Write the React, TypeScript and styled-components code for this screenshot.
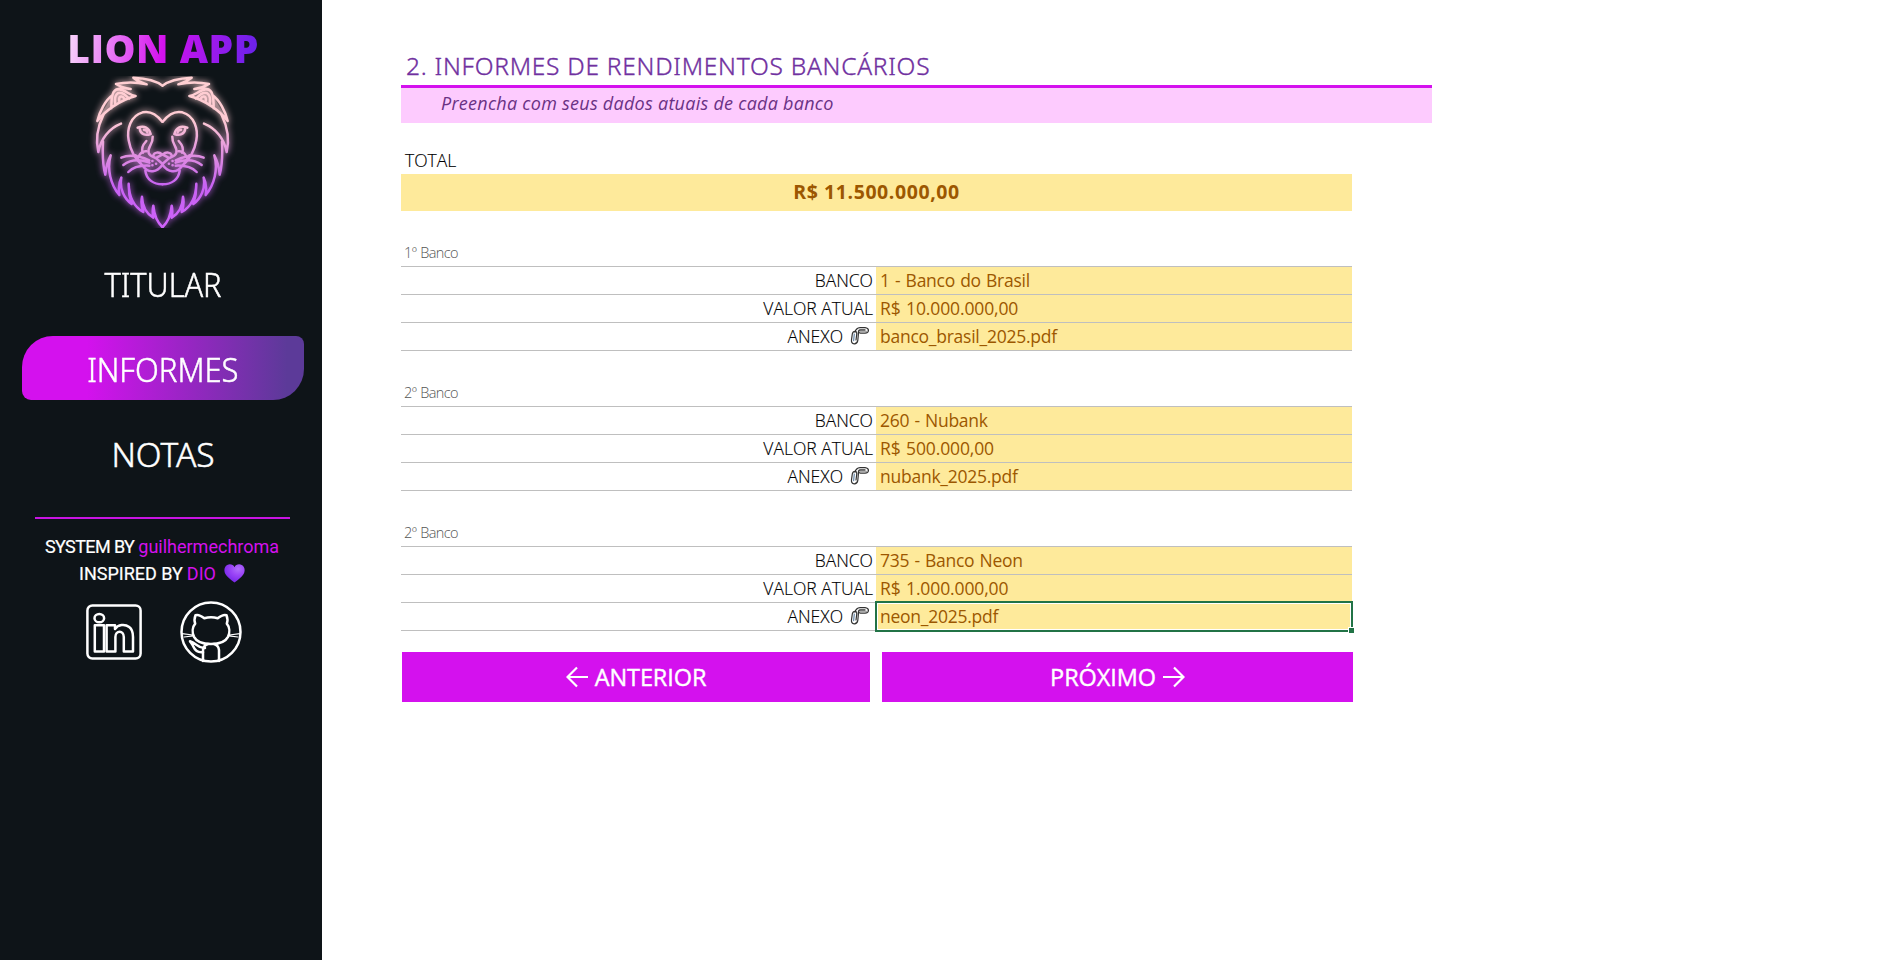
import React from "react";
import styled, { createGlobalStyle } from "styled-components";

const GlobalStyle = createGlobalStyle`
  *, *::before, *::after { box-sizing: border-box; }
  body {
    margin: 0;
    background: #fff;
    color: #000;
    font-family: "Open Sans", "Noto Sans", sans-serif;
  }
`;

const Page = styled.div`
  display: flex;
  height: 960px;
  overflow: hidden;
`;

/* ---------- sidebar ---------- */

const Sidebar = styled.aside`
  display: flex;
  flex-direction: column;
  align-items: center;
  flex: 0 0 322px;
  padding-top: 21px;
  padding-left: 4px;
  background: #0e1418;
  color: #fff;
`;

const Brand = styled.h1`
  margin: 0;
  height: 55px;
  line-height: 54px;
  font-size: 39px;
  font-weight: 900;
  letter-spacing: 0.5px;
  white-space: nowrap;
  background: linear-gradient(98deg, #f9dcfb 0%, #d411ee 50%, #6a22ea 97%);
  -webkit-background-clip: text;
  background-clip: text;
  color: transparent;
`;

const LionLogo = styled.svg`
  display: block;
  width: 165px;
  height: 152px;
  margin-right: 2px;
`;

const Nav = styled.nav`
  display: flex;
  flex-direction: column;
  align-items: center;
  gap: 21px;
  margin-top: 23px;
`;

const NavItem = styled.a<{ $active?: boolean }>`
  display: flex;
  align-items: center;
  justify-content: center;
  width: 282px;
  height: 64px;
  padding-top: 1px;
  border-radius: 31px 8px 31px 9px;
  background: ${(p) =>
    p.$active
      ? "linear-gradient(90deg, #d411ee 0%, #d411ee 23%, #5c3a99 94%)"
      : "transparent"};
  color: #fff;
`;

const NavLabel = styled.span<{ $condense: number }>`
  font-family: "Noto Sans", sans-serif;
  font-size: 33.5px;
  font-weight: 350;
  -webkit-text-stroke: 0.5px #fff;
  transform: scaleX(${(p) => p.$condense});
`;

const Divider = styled.hr`
  width: 255px;
  height: 2px;
  margin: 32px 2px 14px 0;
  border: 0;
  background: #c814e2;
`;

const CreditLine = styled.p`
  display: flex;
  align-items: center;
  height: 27px;
  margin: 0 2px 0 0;
  font-family: Roboto, sans-serif;
  font-size: 18px;
  white-space: nowrap;
`;

const CreditLabel = styled.span<{ $tracking: string }>`
  margin-right: 4px;
  font-weight: 450;
  letter-spacing: ${(p) => p.$tracking};
  -webkit-text-stroke: 0.2px #fff;
`;

const CreditName = styled.span`
  color: #d411ee;
`;

const HeartIcon = styled.svg`
  width: 21px;
  height: 19px;
  margin-left: 8px;
`;

const Socials = styled.div`
  display: flex;
  align-items: center;
  gap: 38px;
  margin: 14px 0 0 2px;
`;

const SocialIcon = styled.svg<{ $size: number }>`
  display: block;
  width: ${(p) => p.$size}px;
  height: ${(p) => p.$size}px;
  fill: none;
  stroke: #fff;
  stroke-width: 2.5;
  stroke-linejoin: round;
  stroke-linecap: round;
`;

/* ---------- content ---------- */

const Content = styled.main`
  display: flex;
  flex-direction: column;
  flex: 1;
  padding: 46px 0 0 79px;
`;

const TitleBlock = styled.header`
  width: 1031px;
`;

const Title = styled.h2`
  height: 42px;
  margin: 0;
  padding-left: 5px;
  border-bottom: 3px solid #d411ee;
  line-height: 39px;
  font-family: "Noto Sans", sans-serif;
  font-size: 24.5px;
  font-weight: 330;
  letter-spacing: 0.74px;
  -webkit-text-stroke: 0.35px #7030a0;
  color: #7030a0;
`;

const Subtitle = styled.p`
  height: 35px;
  margin: 0;
  padding-left: 40px;
  background: #fdcbfe;
  line-height: 31px;
  font-size: 18px;
  font-style: italic;
  letter-spacing: 0.26px;
  color: #6a3184;
`;

const Sheet = styled.div`
  width: 951px;
`;

const TotalLabel = styled.div`
  height: 32px;
  margin-top: 19px;
  padding-left: 4px;
  line-height: 37px;
  font-size: 17.5px;
  font-weight: 320;
  -webkit-text-stroke: 0.15px #000;
`;

const TotalValue = styled.div`
  height: 37px;
  line-height: 36px;
  background: #feea9b;
  text-align: center;
  font-size: 19.5px;
  font-weight: 700;
  letter-spacing: 0.58px;
  color: #9c5700;
`;

const BankLabel = styled.h3`
  height: 27px;
  margin: 28px 0 0;
  padding-left: 3px;
  line-height: 28px;
  font-size: 14.5px;
  font-weight: 320;
  letter-spacing: -0.65px;
  word-spacing: 1px;
  color: #555;
`;

const Rows = styled.div`
  border-top: 1px solid #bfbfbf;
`;

const Row = styled.div`
  display: grid;
  grid-template-columns: 475px 1fr;
  height: 28px;
  border-bottom: 1px solid #bfbfbf;
  line-height: 26px;
  font-size: 17.5px;
`;

const FieldName = styled.div`
  display: flex;
  align-items: center;
  justify-content: flex-end;
  height: 26px;
  padding-right: 3px;
  font-weight: 320;
  -webkit-text-stroke: 0.15px #000;
`;

const FieldValue = styled.div<{ $tracking: string }>`
  position: relative;
  height: 27px;
  padding-left: 4px;
  background: #feea9b;
  color: #9c5700;
  letter-spacing: ${(p) => p.$tracking};
  word-spacing: 1px;
`;

const SelectionFrame = styled.span`
  position: absolute;
  inset: -2px -1px -2px -1px;
  border: 2px solid #217346;
  box-shadow: inset 0 0 0 1px #fff;

  &::after {
    content: "";
    position: absolute;
    right: -3px;
    bottom: -3px;
    width: 6px;
    height: 6px;
    background: #217346;
    border: solid #fff;
    border-width: 1px 0 0 1px;
  }
`;

const ClipIcon = styled.svg`
  width: 20px;
  height: 20px;
  margin: 0 3px 0 7px;
`;

const Actions = styled.div`
  display: flex;
  gap: 12px;
  width: 951px;
  margin: 21px 0 0 1px;
`;

const ActionButton = styled.button<{ $width: number }>`
  display: flex;
  align-items: center;
  justify-content: center;
  gap: 7px;
  width: ${(p) => p.$width}px;
  height: 50px;
  padding: 0;
  border: 0;
  background: #d411ee;
  color: #fff;
  font-family: "Open Sans", sans-serif;
  font-size: 23.5px;
  font-weight: 500;
  letter-spacing: -0.1px;
  -webkit-text-stroke: 0.4px #fff;
`;

const ArrowIcon = styled.svg`
  width: 22px;
  height: 22px;
  fill: none;
  stroke: #fff;
  stroke-width: 2.2;
`;

function Lion() {
  return (
    <LionLogo viewBox="0 33 495 456">
      <defs>
        <linearGradient id="mane" gradientUnits="userSpaceOnUse" x1="0" y1="36" x2="0" y2="488">
          <stop offset="0" stopColor="#ffcfd2" />
          <stop offset="0.28" stopColor="#ffcbd3" />
          <stop offset="0.52" stopColor="#df8ee0" />
          <stop offset="0.72" stopColor="#c862f3" />
          <stop offset="1" stopColor="#cf63fa" />
        </linearGradient>
        <filter id="glow" filterUnits="userSpaceOnUse" x="0" y="33" width="495" height="456">
          <feGaussianBlur stdDeviation="10" />
        </filter>
        <g id="half">
          <path d="M247 62 Q222 41 160 38 Q176 51 200 58 Q154 47 108 57 Q126 68 152 72 Q126 66 108 74" />
          <path d="M94 130 C94 98 96 73 116 73 C137 74 147 91 167 93 C118 106 75 138 52 168 C59 139 76 106 97 91" />
          <path d="M106 117 C101 88 114 81 125 84 C137 88 139 95 148 100" />
          <path d="M118 109 C115 94 125 89 134 102" />
          <path d="M70 150 C53 185 46 222 55 261 C62 223 87 190 123 176" />
          <path d="M69 230 C67 270 68 300 76 329 Q79 295 92 271 C80 312 92 360 118 390 Q113 359 124 338 C118 370 132 400 155 417 Q145 388 146 356 C147 397 164 426 190 441 Q181 417 186 395 C187 427 202 447 220 458 Q216 438 220 422 C223 454 235 475 247 486" />
          <path d="M247 170 C224 141 205 138 188 142 C151 152 140 193 146 226 C151 256 166 283 188 302 C206 329 232 320 247 300" />
          <path d="M196 317 C199 344 221 358 247 358" />
          <path d="M173 188 Q204 178 212 207 C196 213 181 208 179 190" />
          <path d="M192 194 Q201 194 202 202" />
          <path d="M218 215 C220 239 201 244 206 264 C212 279 227 273 235 286 L247 296" />
          <path d="M199 228 C188 240 182 251 189 263" />
          <path d="M247 269 C236 259 223 262 220 271 M231 277 L247 269" />
          <path d="M124 278 Q158 264 208 286 M130 300 Q162 276 208 293 M145 321 Q165 300 208 302" />
          <path d="M176 275 Q184 257 200 259 M167 271 L181 294" />
          <path d="M217 288 h.5 M228 296 h.5 M217 301 h.5" />
        </g>
        <g id="face">
          <use href="#half" />
          <use href="#half" transform="translate(495 0) scale(-1 1)" />
        </g>
      </defs>
      <path d="M52 168 L97 91 L108 74 L148 99 L94 130Z M443 168 L398 91 L387 74 L347 99 L401 130Z" fill="#ffcfd2" opacity=".32" />
      <g fill="none" stroke="url(#mane)" strokeLinecap="round" strokeLinejoin="round">
        <use href="#face" strokeWidth="11" filter="url(#glow)" opacity=".7" />
        <use href="#face" strokeWidth="7.5" />
      </g>
    </LionLogo>
  );
}

function Heart() {
  return (
    <HeartIcon viewBox="0 0 21 19">
      <defs>
        <radialGradient id="heart" cx=".68" cy=".25" r=".7">
          <stop offset="0" stopColor="#b070fb" />
          <stop offset=".5" stopColor="#9b45f7" />
          <stop offset="1" stopColor="#7d2ceb" />
        </radialGradient>
      </defs>
      <path
        fill="url(#heart)"
        d="M10.5 3.2 C8.8-.6 3.2-.5 1.2 3 C-.8 6.7 1.1 10.5 3.8 13 C6 15.1 8.2 17 10.5 18.6 C12.8 17 15 15.1 17.2 13 C19.9 10.5 21.8 6.7 19.8 3 C17.8-.5 12.2-.6 10.5 3.2Z"
      />
    </HeartIcon>
  );
}

function LinkedIn() {
  return (
    <SocialIcon $size={56} viewBox="0 0 56 56">
      <rect x="1.4" y="1.4" width="53.2" height="53.2" rx="5" />
      <ellipse cx="13.3" cy="14.2" rx="4.8" ry="4.1" />
      <path d="M8.8 21.2 H18 V47.4 H8.8Z" />
      <path d="M20.6 21.2 H29 V25 C32 20.3 39 19.8 43.2 23 C46.2 25.2 47 29 47 33 V47.4 H37.8 V33 C37.8 25.8 29.4 26.3 29.4 33 V47.4 H20.6Z" />
    </SocialIcon>
  );
}

function GitHub() {
  return (
    <SocialIcon $size={62} viewBox="0 0 62 62">
      <circle cx="31" cy="31" r="29.5" />
      <path d="M15.5 14.2 C18 13.2 21.5 15 24.3 17.2 Q31 15.2 37.7 17.2 C40.5 15 44 13.2 46.5 14.2 C47.8 17.5 47.6 20.5 46.8 22.6 C49.7 26 50 31.5 48 35.8 C45.3 41 39 43 31 43 C23 43 16.7 41 14 35.8 C12 31.5 12.3 26 15.2 22.6 C14.4 20.5 14.2 17.5 15.5 14.2Z" />
      <path d="M23 60 V49 C23.4 45.5 25.5 43.6 28 43 M39 60 V49 C38.6 45.5 36.5 43.6 34 43" />
      <path d="M25 47 C18.5 48 17 42.5 10 40.2 C11.5 42.5 12.5 43.7 13.3 45.6 C15.5 50.8 19 51.8 23 51.2" />
      <g strokeWidth="1.2">
        <path d="M2 32.6 L12.8 34 M4 36 L13.4 34.8 M60 32.6 L49.2 34 M58 36 L48.6 34.8" />
      </g>
    </SocialIcon>
  );
}

function LinkedClips() {
  return (
    <ClipIcon viewBox="0 0 20 20" fill="none" strokeLinecap="round">
      <path d="M5 6.2 Q6 2 10 1.7 H15 Q18.6 2.2 18.4 4.6 Q18 7 15 7.2 H10.5 Q8 6.7 8.6 5 Q9 4 10.6 4 H15" stroke="#333" strokeWidth="1.3" />
      <path d="M9.6 5.5 H17" stroke="#aaa" strokeWidth="1.6" />
      <path d="M8.6 6 L7.8 14.5 Q7 18 4.2 17.8 Q1 17.3 1.5 13.8 L2.3 8 Q3 5 5.3 5.3 Q7.3 5.9 6.7 8.5 L6 14" stroke="#333" strokeWidth="1.2" />
      <path d="M4.3 8.2 L3.6 14.5" stroke="#6f8fb0" strokeWidth="1.3" />
    </ClipIcon>
  );
}

const navItems = [
  { label: "TITULAR", condense: 0.915 },
  { label: "INFORMES", condense: 0.925, active: true },
  { label: "NOTAS", condense: 1 },
];

const banks = [
  { title: "1º Banco", bank: "1 - Banco do Brasil", value: "R$ 10.000.000,00", file: "banco_brasil_2025.pdf" },
  { title: "2º Banco", bank: "260 - Nubank", value: "R$ 500.000,00", file: "nubank_2025.pdf" },
  { title: "2º Banco", bank: "735 - Banco Neon", value: "R$ 1.000.000,00", file: "neon_2025.pdf", selected: true },
];

export default function App() {
  return (
    <>
      <GlobalStyle />
      <Page>
        <Sidebar>
          <Brand>LION APP</Brand>
          <Lion />
          <Nav>
            {navItems.map((item) => (
              <NavItem key={item.label} $active={item.active}>
                <NavLabel $condense={item.condense}>{item.label}</NavLabel>
              </NavItem>
            ))}
          </Nav>
          <Divider />
          <CreditLine>
            <CreditLabel $tracking="-0.6px">SYSTEM BY</CreditLabel>
            <CreditName>guilhermechroma</CreditName>
          </CreditLine>
          <CreditLine>
            <CreditLabel $tracking="0px">INSPIRED BY</CreditLabel>
            <CreditName>DIO</CreditName>
            <Heart />
          </CreditLine>
          <Socials>
            <LinkedIn />
            <GitHub />
          </Socials>
        </Sidebar>

        <Content>
          <TitleBlock>
            <Title>2. INFORMES DE RENDIMENTOS BANCÁRIOS</Title>
            <Subtitle>Preencha com seus dados atuais de cada banco</Subtitle>
          </TitleBlock>
          <Sheet>
            <TotalLabel>TOTAL</TotalLabel>
            <TotalValue>R$ 11.500.000,00</TotalValue>
            {banks.map((b) => (
              <section key={b.file}>
                <BankLabel>{b.title}</BankLabel>
                <Rows>
                  <Row>
                    <FieldName>BANCO</FieldName>
                    <FieldValue $tracking="-0.28px">{b.bank}</FieldValue>
                  </Row>
                  <Row>
                    <FieldName>VALOR ATUAL</FieldName>
                    <FieldValue $tracking="-0.12px">{b.value}</FieldValue>
                  </Row>
                  <Row>
                    <FieldName>
                      ANEXO
                      <LinkedClips />
                    </FieldName>
                    <FieldValue $tracking="-0.25px">
                      {b.file}
                      {b.selected && <SelectionFrame />}
                    </FieldValue>
                  </Row>
                </Rows>
              </section>
            ))}
          </Sheet>
          <Actions>
            <ActionButton $width={468}>
              <ArrowIcon viewBox="0 0 22 22">
                <path d="M22 11 H1.5 M11 1.5 L1.5 11 L11 20.5" />
              </ArrowIcon>
              ANTERIOR
            </ActionButton>
            <ActionButton $width={471}>
              PRÓXIMO
              <ArrowIcon viewBox="0 0 22 22">
                <path d="M0 11 H20.5 M11 1.5 L20.5 11 L11 20.5" />
              </ArrowIcon>
            </ActionButton>
          </Actions>
        </Content>
      </Page>
    </>
  );
}
